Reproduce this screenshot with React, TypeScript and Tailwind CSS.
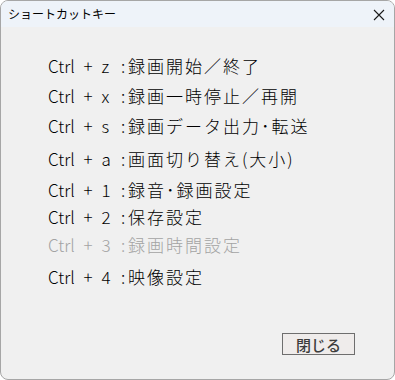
const rows = [
  { key: "Ctrl + z", label: "録画開始／終了", mt: "mt-[27px]" },
  { key: "Ctrl + x", label: "録画一時停止／再開", mt: "mt-[8px]" },
  { key: "Ctrl + s", label: "録画データ出力･転送", mt: "mt-[8px]" },
  { key: "Ctrl + a", label: "画面切り替え(大小)", mt: "mt-[11px]" },
  { key: "Ctrl + 1", label: "録音･録画設定", mt: "mt-[9px]" },
  { key: "Ctrl + 2", label: "保存設定", mt: "mt-[5px]" },
  { key: "Ctrl + 3", label: "録画時間設定", mt: "mt-[6px]", disabled: true },
  { key: "Ctrl + 4", label: "映像設定", mt: "mt-[10px]" }
];

export default function App() {
  return (
    <div
      className="h-[380px] w-[395px] overflow-hidden rounded-lg border border-[#a6a6a6] bg-[#f0f0f0]"
      style={{ fontFamily: '"Noto Sans CJK JP", "Noto Sans", sans-serif' }}
    >
      <div className="flex h-[26px] items-center justify-between bg-[#eef3f9] pl-[7px] pr-[9px]">
        <span className="text-[12px] leading-none text-black">ショートカットキー</span>
        <svg width="12" height="12" viewBox="0 0 12 12" className="mt-[1px]">
          <path d="M1 1 L11 11 M11 1 L1 11" stroke="#1a1a1a" strokeWidth="1.1" />
        </svg>
      </div>

      <div className="relative flex h-[352px] flex-col pl-[47px]">
        {rows.map((row) => (
          <div
            key={row.key}
            className={`${row.mt} flex h-[22px] items-center text-[17px] font-light leading-none ${row.disabled ? "text-[#a3a3a3]" : "text-black"}`}
          >
            <span className="w-[70px] whitespace-pre" style={{ wordSpacing: "5px" }}>{row.key}</span>
            <span className="w-[10px] text-center">:</span>
            <span className="tracking-[2px]">{row.label}</span>
          </div>
        ))}

        <div className="absolute left-[281px] top-[306px] flex h-[22px] w-[73px] items-center justify-center border border-[#6e6e6e] bg-[#efeceb] text-[15px] font-medium leading-none text-[#3c3c3c]">
          閉じる
        </div>
      </div>
    </div>
  );
}
